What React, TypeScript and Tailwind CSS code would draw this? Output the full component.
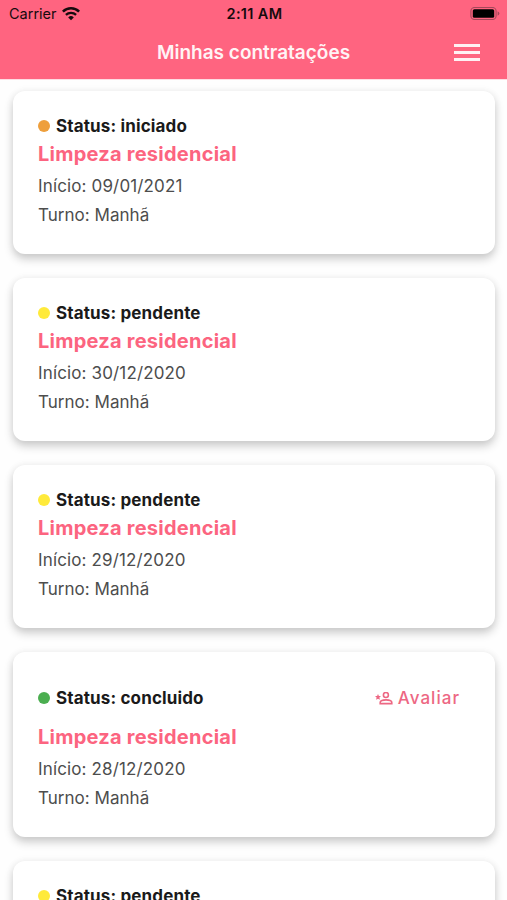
type Booking = {
  status: string;
  dot: string;
  date: string;
  rate?: boolean;
};

const bookings: Booking[] = [
  { status: 'iniciado', dot: 'bg-[#ee9f3c]', date: '09/01/2021' },
  { status: 'pendente', dot: 'bg-[#ffea3a]', date: '30/12/2020' },
  { status: 'pendente', dot: 'bg-[#ffea3a]', date: '29/12/2020' },
  { status: 'concluido', dot: 'bg-[#4bae50]', date: '28/12/2020', rate: true },
  { status: 'pendente', dot: 'bg-[#ffea3a]', date: '27/12/2020' },
];

function WifiIcon() {
  return (
    <svg className="ml-[5px] h-[14px] w-[18px]" viewBox="0 0 18 14" fill="none" stroke="#160b0d">
      <path d="M0.9 4.6a11.6 11.6 0 0 1 16.2 0" strokeWidth="2.6" />
      <path d="M3.9 7.9a7.4 7.4 0 0 1 10.2 0" strokeWidth="2.3" />
      <path d="M9 13.3 6.2 10.4a4 4 0 0 1 5.6 0Z" fill="#160b0d" stroke="none" />
    </svg>
  );
}

function BatteryIcon() {
  return (
    <svg className="h-[14px] w-[30px]" viewBox="0 0 30 14" fill="none">
      <rect x="0.9" y="0.5" width="25.2" height="12" rx="3.6" stroke="#a5485a" strokeWidth="1.1" />
      <rect x="2.8" y="2.2" width="21.4" height="8.6" rx="1.6" fill="#000" />
      <path d="M27.6 4.3q1.8.8 1.8 2.2t-1.8 2.2Z" fill="#a5485a" />
    </svg>
  );
}

function RateIcon() {
  return (
    <svg className="h-[14px] w-[18px]" viewBox="0 0 18 14" fill="none" stroke="#ed6783" strokeWidth="1.6">
      <circle cx="10.9" cy="3" r="2.5" />
      <path d="M5.2 11.6v-1c0-2 3.4-2.7 5.8-2.7s5.8.7 5.8 2.7v1Z" />
      <path d="m3 1.9.9 2 2.1.2-1.6 1.5.5 2.2L3 6.700 1.1 7.800l.5-2.2L0 4.100l2.100-.2Z" fill="#ed6783" stroke="none" />
    </svg>
  );
}

function BookingCard({ status, dot, date, rate }: Booking) {
  return (
    <article
      className={`flex shrink-0 flex-col rounded-[12px] bg-white px-[25px] shadow-[0_5px_10px_rgba(0,0,0,0.2),0_0_8px_rgba(0,0,0,0.05)] ${rate ? 'h-[185px] pt-[32px]' : 'h-[163px] pt-[22px]'}`}
    >
      <div className={`flex h-[26px] items-center justify-between ${rate ? 'mb-[12px]' : ''}`}>
        <div className="flex items-center gap-[6px]">
          <span className={`size-[12px] rounded-full ${dot} ${rate ? 'mt-[2px]' : ''}`} />
          <span
            className={`text-[17px] font-bold tracking-[0.14px] text-[#1a1a1a] ${rate ? 'pt-[4px]' : 'pt-[2px]'}`}
          >
            Status: {status}
          </span>
        </div>
        {rate && (
          <button className="mr-[10px] flex items-center gap-[5px] pt-[3px] text-[17px] font-medium tracking-[1.02px] text-[#ed6783]">
            <RateIcon />
            Avaliar
          </button>
        )}
      </div>
      <h2 className="h-[31px] text-[20px] leading-[30px] font-bold tracking-[0.24px] text-[#fc6480]">
        Limpeza residencial
      </h2>
      <p className="h-[29px] text-[17px] leading-[32px] tracking-[0.14px] text-[#4d4d4d]">Início: {date}</p>
      <p className="text-[17px] leading-[32px] tracking-[0.03px] text-[#4d4d4d]">Turno: Manhã</p>
    </article>
  );
}

export default function App() {
  return (
    <div className="flex h-[900px] w-[507px] flex-col overflow-hidden bg-[#fefefe] font-['Inter','Liberation_Sans',sans-serif]">
      <header className="h-[79px] shrink-0 bg-[#ff6480] shadow-[0_1px_0_#ffdce2]">
        <div className="grid h-[27px] grid-cols-3 items-center pr-[7px] pl-[9px] text-[14.5px] text-[#160b0d]">
          <div className="flex items-center">
            <span>Carrier</span>
            <WifiIcon />
          </div>
          <span className="text-center font-semibold tracking-[0.35px]">2:11 AM</span>
          <div className="flex justify-end">
            <BatteryIcon />
          </div>
        </div>
        <div className="grid h-[50px] grid-cols-[1fr_auto_1fr] items-center pr-[27px] pl-[27px]">
          <span />
          <h1 className="pt-[2px] text-[19px] font-semibold text-[#fff3f5]">Minhas contratações</h1>
          <button aria-label="Menu" className="flex w-[26px] flex-col gap-[4px] justify-self-end">
            <span className="h-[3px] bg-[#fff0f3]" />
            <span className="h-[3px] bg-[#fff0f3]" />
            <span className="h-[3px] bg-[#fff0f3]" />
          </button>
        </div>
      </header>
      <main className="flex flex-col gap-[24px] pt-[12px] pr-[12px] pl-[13px]">
        {bookings.map((booking) => (
          <BookingCard key={booking.date} {...booking} />
        ))}
      </main>
    </div>
  );
}
